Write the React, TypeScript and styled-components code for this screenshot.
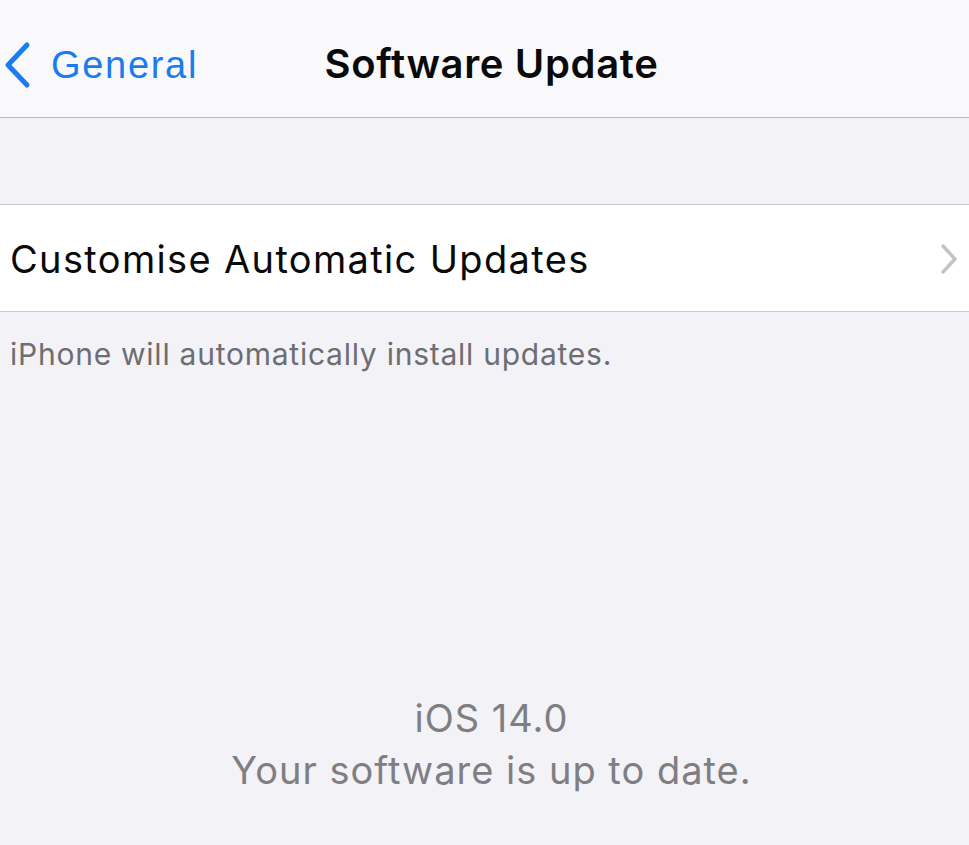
import React from "react";
import styled, { createGlobalStyle } from "styled-components";

const GlobalStyle = createGlobalStyle`
  html, body {
    margin: 0;
    padding: 0;
    background: #f2f2f7;
  }
  body {
    font-family: Inter, "Noto Sans", "Liberation Sans", sans-serif;
    -webkit-font-smoothing: antialiased;
  }
`;

export default function App() {
  return (
    <>
      <GlobalStyle />
      <Screen>
        <NavBar>
          <BackButton type="button">
            <svg width="28" height="48" viewBox="0 0 28 48" fill="none">
              <path
                d="M24 4 L5 24 L24 44"
                stroke="#1a7cf0"
                strokeWidth="5"
                strokeLinecap="round"
                strokeLinejoin="round"
              />
            </svg>
            <BackLabel>General</BackLabel>
          </BackButton>
          <Title>Software Update</Title>
        </NavBar>

        <Spacer />

        <Group>
          <Row>
            <RowLabel>Customise Automatic Updates</RowLabel>
            <svg width="20" height="32" viewBox="0 0 20 32" fill="none">
              <path
                d="M4 3 L16 16 L4 29"
                stroke="#c4c4c8"
                strokeWidth="3.5"
                strokeLinecap="round"
                strokeLinejoin="round"
              />
            </svg>
          </Row>
        </Group>
        <Footer>iPhone will automatically install updates.</Footer>

        <Status>
          <Version>iOS 14.0</Version>
          <Version>Your software is up to date.</Version>
        </Status>
      </Screen>
    </>
  );
}

const Screen = styled.div`
  width: 969px;
  height: 845px;
  background: #f2f2f7;
  display: flex;
  flex-direction: column;
  overflow: hidden;
`;

const NavBar = styled.header`
  position: relative;
  height: 118px;
  background: #f9f9fb;
  border-bottom: 1.5px solid #b9b9bd;
  display: flex;
  align-items: center;
  justify-content: center;
  box-sizing: border-box;
  flex-shrink: 0;
`;

const BackButton = styled.button`
  position: absolute;
  left: 3px;
  top: 41px;
  display: flex;
  align-items: center;
  gap: 20px;
  background: none;
  border: none;
  padding: 0;
  cursor: pointer;
`;

const BackLabel = styled.span`
  font-size: 38px;
  color: #1a7cf0;
  letter-spacing: 1.7px;
`;

const Title = styled.h1`
  margin: 10px 0 0 14px;
  font-size: 40px;
  font-weight: 600;
  color: #0a0a0a;
  letter-spacing: 0.65px;
`;

const Spacer = styled.div`
  height: 86px;
  flex-shrink: 0;
`;

const Group = styled.section`
  background: #ffffff;
  border-top: 1.5px solid #c8c8cc;
  border-bottom: 1.5px solid #c8c8cc;
`;

const Row = styled.div`
  height: 104px;
  display: flex;
  align-items: center;
  justify-content: space-between;
  padding: 2px 10px 0 10px;
`;

const RowLabel = styled.span`
  font-size: 38px;
  color: #0a0a0a;
  letter-spacing: 1.35px;
`;

const Footer = styled.p`
  margin: 24px 0 0 10px;
  font-size: 30px;
  color: #6d6d72;
  letter-spacing: 0.75px;
`;

const Status = styled.div`
  margin-top: auto;
  margin-bottom: 51px;
  display: flex;
  flex-direction: column;
  align-items: center;
  gap: 4px;
  padding-left: 14px;
`;

const Version = styled.span`
  font-size: 38px;
  color: #7e7e83;
  line-height: 48px;
  letter-spacing: 1px;
`;
